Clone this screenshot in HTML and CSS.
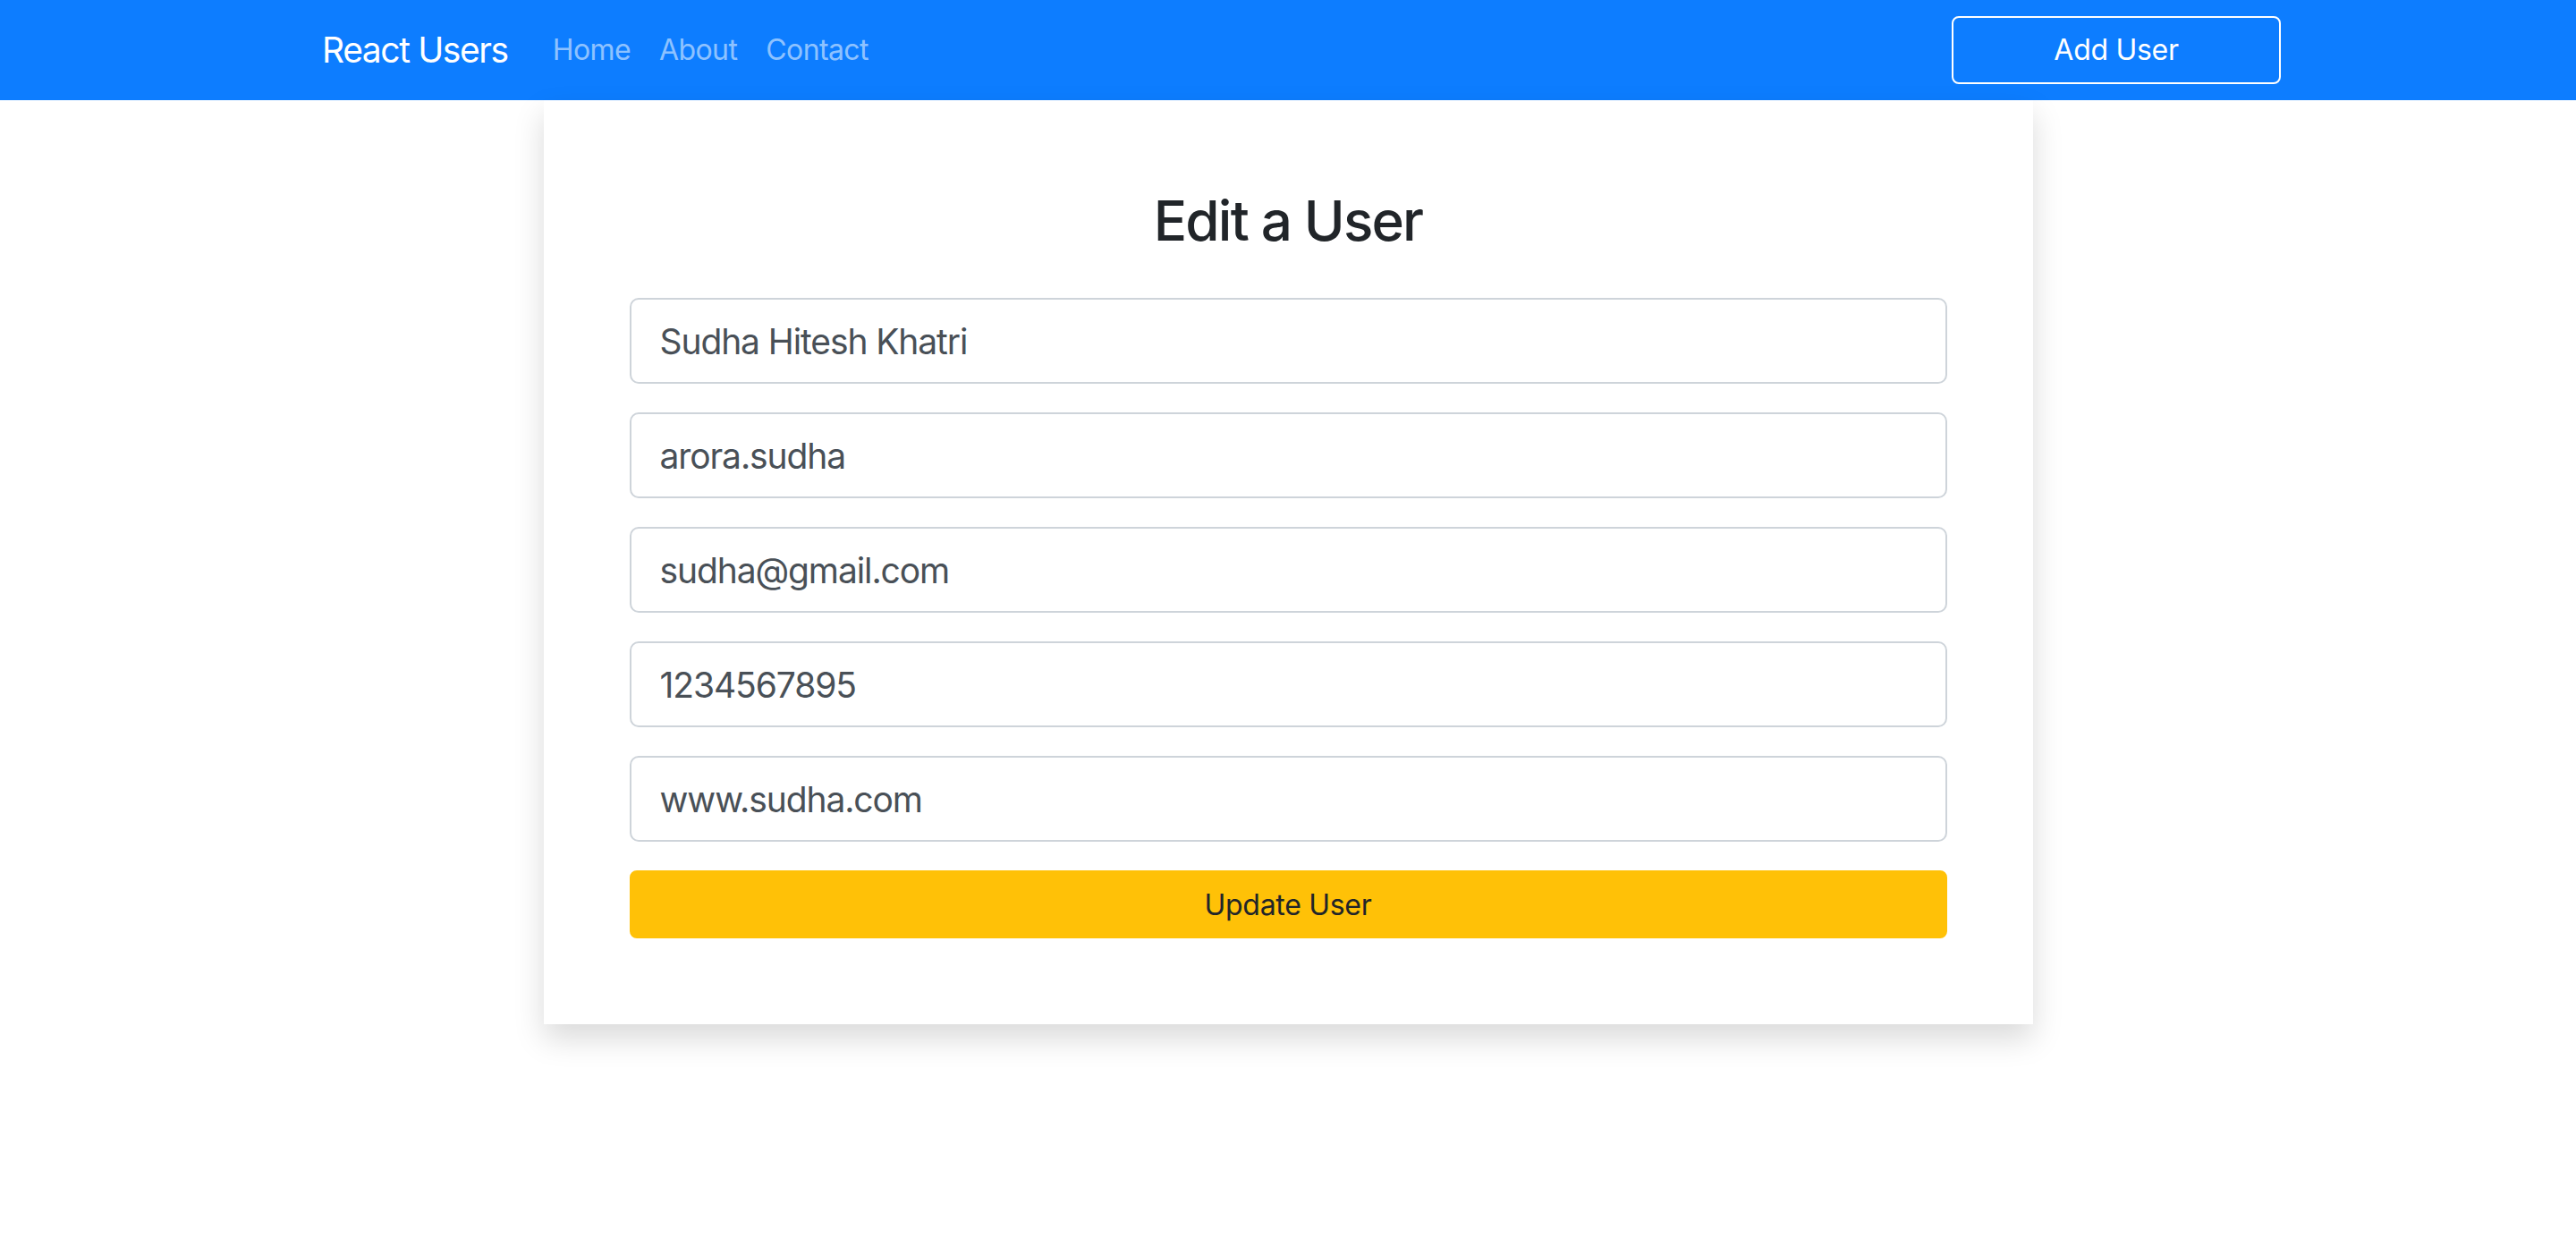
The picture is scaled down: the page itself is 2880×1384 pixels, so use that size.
FILE: index.html
```html
<!DOCTYPE html>
<html lang="en">
<head>
<meta charset="utf-8">
<title>React Users</title>
<link rel="stylesheet" href="styles.css">
</head>
<body>
<nav class="navbar">
  <div class="container nav-inner">
    <div class="nav-left">
      <a class="brand" href="#">React Users</a>
      <ul class="nav-links">
        <li><a href="#">Home</a></li>
        <li><a href="#">About</a></li>
        <li><a href="#">Contact</a></li>
      </ul>
    </div>
    <a class="btn-outline" href="#">Add User</a>
  </div>
</nav>
<main class="container page">
  <div class="card">
    <h2 class="title">Edit a User</h2>
    <form class="form">
      <input class="field" type="text" value="Sudha Hitesh Khatri">
      <input class="field" type="text" value="arora.sudha">
      <input class="field" type="email" value="sudha@gmail.com">
      <input class="field" type="text" value="1234567895">
      <input class="field" type="text" value="www.sudha.com">
      <button class="btn-warning" type="button">Update User</button>
    </form>
  </div>
</main>
</body>
</html>
```
FILE: styles.css
```css
* { box-sizing: border-box; }
html, body {
  margin: 0;
  padding: 0;
}
body {
  font-family: Inter, "Liberation Sans", sans-serif;
  font-size: 32px;
  line-height: 1.5;
  color: #212529;
  background: #fff;
  min-height: 1384px;
}
.container {
  width: 2280px;
  margin: 0 auto;
  padding: 0 30px;
}
.page {
  padding-bottom: 120px;
}
.navbar {
  background: #0d7dff;
  height: 112px;
}
.nav-inner {
  height: 112px;
  display: flex;
  align-items: center;
  justify-content: space-between;
}
.nav-left {
  display: flex;
  align-items: center;
  padding-left: 30px;
}
.brand {
  color: #fff;
  text-decoration: none;
  font-size: 39px;
  line-height: 60px;
  margin-right: 34px;
  letter-spacing: -1.4px;
}
.nav-links {
  display: flex;
  list-style: none;
  margin: 0;
  padding: 0;
}
.nav-links a {
  display: block;
  color: rgba(255, 255, 255, 0.55);
  text-decoration: none;
  font-size: 32px;
  padding: 0 16px;
  letter-spacing: -0.6px;
}
.btn-outline {
  display: flex;
  align-items: center;
  justify-content: center;
  width: 368px;
  height: 76px;
  border: 2px solid #fff;
  border-radius: 8px;
  color: #fff;
  text-decoration: none;
  font-size: 32px;
  letter-spacing: -0.3px;
}
.card {
  width: 1665px;
  margin: 0 auto;
  padding: 96px;
  background: #fff;
  box-shadow: 0 16px 32px rgba(0, 0, 0, 0.15);
}
.title {
  margin: 0 0 48px;
  text-align: center;
  font-size: 62px;
  font-weight: 500;
  line-height: 77px;
  color: #212529;
  letter-spacing: -1.8px;
}
.form {
  display: flex;
  flex-direction: column;
  gap: 32px;
}
.field {
  display: block;
  width: 100%;
  height: 96px;
  padding: 16px 32px;
  font-family: inherit;
  font-size: 39px;
  color: #495057;
  border: 2px solid #ced4da;
  border-radius: 10px;
  background: #fff;
  outline: none;
  letter-spacing: -1.1px;
}
.btn-warning {
  display: block;
  width: 100%;
  height: 76px;
  border: 2px solid #ffc107;
  border-radius: 8px;
  background: #ffc107;
  color: #212529;
  font-family: inherit;
  font-size: 32px;
  letter-spacing: -0.3px;
  cursor: pointer;
}
```
